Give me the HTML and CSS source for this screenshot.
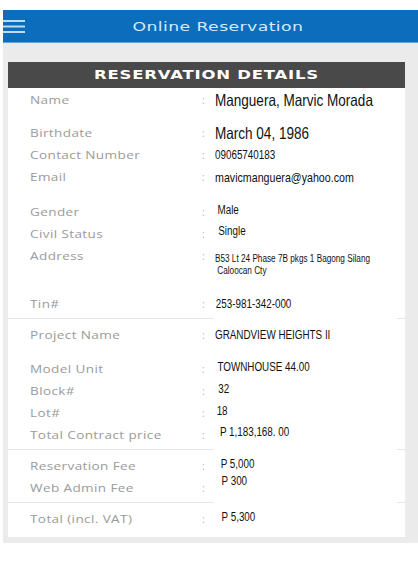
FILE: index.html
```html
<!DOCTYPE html>
<html>
<head>
<meta charset="utf-8">
<link rel="stylesheet" href="styles.css">
</head>
<body>
<header class="topbar">
  <svg class="burger" width="22" height="14" viewBox="0 0 22 14"><rect x="0" y="0" width="22" height="2" fill="#bcdcf3"/><rect x="0" y="5.5" width="22" height="2" fill="#bcdcf3"/><rect x="0" y="11" width="22" height="2" fill="#bcdcf3"/></svg>
  <div class="title"><span>Online Reservation</span></div>
</header>
<main class="page">
  <section class="card">
    <div class="bar"><span>RESERVATION DETAILS</span></div>
    <div class="row first"><span class="lbl">Name</span><span class="col">:</span><span class="val big">Manguera, Marvic Morada</span></div>
    <div class="row gap11"><span class="lbl">Birthdate</span><span class="col">:</span><span class="val big">March 04, 1986</span></div>
    <div class="row"><span class="lbl">Contact Number</span><span class="col">:</span><span class="val sm">09065740183</span></div>
    <div class="row"><span class="lbl">Email</span><span class="col">:</span><span class="val md">mavicmanguera@yahoo.com</span></div>
    <div class="row gap13"><span class="lbl">Gender</span><span class="col">:</span><span class="val sm in3 up2">Male</span></div>
    <div class="row"><span class="lbl">Civil Status</span><span class="col">:</span><span class="val sm in4 up3">Single</span></div>
    <div class="row addr"><span class="lbl">Address</span><span class="col">:</span><span class="val xs">B53 Lt 24 Phase 7B pkgs 1 Bagong Silang<br>&nbsp;Caloocan Cty</span></div>
    <div class="row"><span class="lbl">Tin#</span><span class="col">:</span><span class="val sm in1">253-981-342-000</span></div>
    <div class="sep"><i></i><b></b></div>
    <div class="row"><span class="lbl">Project Name</span><span class="col">:</span><span class="val sm">GRANDVIEW HEIGHTS II</span></div>
    <div class="row gap12"><span class="lbl">Model Unit</span><span class="col">:</span><span class="val sm in3 up2">TOWNHOUSE 44.00</span></div>
    <div class="row"><span class="lbl">Block#</span><span class="col">:</span><span class="val sm in4 up2">32</span></div>
    <div class="row"><span class="lbl">Lot#</span><span class="col">:</span><span class="val sm in2 up2">18</span></div>
    <div class="row"><span class="lbl">Total Contract price</span><span class="col">:</span><span class="val sm in6 up3">P 1,183,168. 00</span></div>
    <div class="sep"><i></i><b></b></div>
    <div class="row"><span class="lbl">Reservation Fee</span><span class="col">:</span><span class="val sm in7 up2">P 5,000</span></div>
    <div class="row"><span class="lbl">Web Admin Fee</span><span class="col">:</span><span class="val sm in8 up7">P 300</span></div>
    <div class="sep"><i></i><b></b></div>
    <div class="row"><span class="lbl">Total (incl. VAT)</span><span class="col">:</span><span class="val sm in8 up2">P 5,300</span></div>
  </section>
</main>
</body>
</html>
```
FILE: styles.css
```css
html, body {
  margin: 0;
  background: #ffffff;
}
body {
  padding: 10px 0 0 3px;
  width: 415px;
}
.topbar {
  height: 32px;
  background: #0b6dbb;
  border-bottom: 1px solid #5fa6dd;
  display: flex;
  align-items: center;
}
.burger {
  display: block;
  flex: none;
  margin-top: 1px;
}
.title {
  flex: 1;
  text-align: center;
  padding-right: 8px;
  color: #d4eaf8;
  font-family: "DejaVu Sans", sans-serif;
  font-size: 12.5px;
  letter-spacing: 0.3px;
}
.title span {
  display: inline-block;
  transform: scaleX(1.38);
}
.page {
  display: block;
  background: #ebebeb;
  padding: 19px 13px 6px 5px;
}
.card {
  background: #ffffff;
  padding-bottom: 7px;
}
.bar {
  height: 26px;
  line-height: 26px;
  background: #494949;
  color: #ffffff;
  text-align: center;
  font-family: "DejaVu Sans", sans-serif;
  font-weight: bold;
  font-size: 13px;
  letter-spacing: 0.6px;
}
.bar span {
  display: inline-block;
  transform: scaleX(1.27);
}
.row {
  display: flex;
  align-items: center;
  height: 22px;
  padding-left: 22px;
}
.row.first { margin-top: 1px; }
.row.gap11 { margin-top: 11px; }
.row.gap12 { margin-top: 12px; }
.row.gap13 { margin-top: 13px; }
.row.addr {
  height: 48px;
  align-items: flex-start;
  line-height: 22px;
}
.lbl {
  width: 133px;
  margin-right: 39px;
  flex: none;
  font-family: "Open Sans", sans-serif;
  font-size: 10.5px;
  letter-spacing: 0.3px;
  color: #9a9a9a;
  white-space: nowrap;
  transform: scaleX(1.29);
  transform-origin: left center;
}
.col {
  width: 13px;
  flex: none;
  font-family: "Open Sans", sans-serif;
  font-size: 10px;
  color: #b4b4b4;
}
.val {
  font-family: "Liberation Sans", Arial, sans-serif;
  color: #111111;
  white-space: nowrap;
  transform: scaleX(0.82);
  transform-origin: left center;
}
.val.big { font-size: 16.5px; }
.val.md { font-size: 13px; }
.val.sm { font-size: 12px; }
.val.xs {
  font-size: 10px;
  line-height: 12px;
  padding-top: 8px;
  transform-origin: left top;
}
.in1 { padding-left: 1px; }
.in2 { padding-left: 2px; }
.in3 { padding-left: 3px; }
.in4 { padding-left: 4px; }
.in6 { padding-left: 6px; }
.in7 { padding-left: 7px; }
.in8 { padding-left: 8px; }
.up2 { margin-bottom: 4px; }
.up3 { margin-bottom: 6px; }
.up7 { margin-bottom: 14px; }
.sep {
  display: flex;
  justify-content: space-between;
  margin: 3px 0 5px;
  height: 1px;
}
.sep i {
  display: block;
  width: 205px;
  background: #e6e6e6;
}
.sep b {
  display: block;
  width: 8px;
  background: #e6e6e6;
}
```
